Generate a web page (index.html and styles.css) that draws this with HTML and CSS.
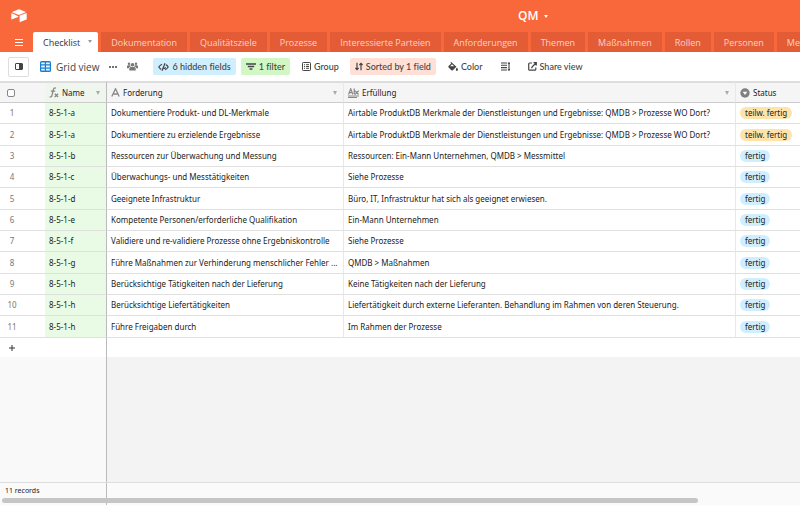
FILE: index.html
```html
<!DOCTYPE html>
<html lang="de">
<head>
<meta charset="utf-8">
<meta name="viewport" content="width=device-width, initial-scale=1">
<title>QM</title>
<link rel="stylesheet" href="styles.css">
</head>
<body>
<header class="topbar">
  <a class="logo" href="#" aria-label="Home"><svg width="16" height="14" viewBox="0 0 16 14" fill="currentColor"><path d="M7.1.5 1.6 2.7c-.4.2-.4.6 0 .8L7.200 5.700c.5.2 1 .2 1.500 0l5.600-2.200c.4-.2.4-.6 0-.8L8.800.5c-.6-.2-1.100-.2-1.700 0z"/><path d="M8.600 7v5.700c0 .3.300.5.600.4l6.200-2.500c.2-.1.300-.2.300-.4V4.600c0-.3-.3-.5-.6-.4L8.900 6.600c-.2.100-.3.200-.3.400z"/><path d="M7.100 7.300 1 4.300c-.3-.2-.7 0-.7.4v5.200c0 .5.500.6.800.4l6-2.400c.3-.1.300-.4 0-.6z"/></svg></a>
  <h1><button class="base" type="button">QM <i class="caret"></i></button></h1>
</header>
<nav class="tabs">
  <button class="menu" type="button" aria-label="Tables"><svg width="8" height="7" viewBox="0 0 8 7" stroke="currentColor" stroke-width="1"><path d="M0 .5h8M0 3.500h8M0 6.500h8"/></svg></button>
  <a class="tab active" href="#">Checklist <i class="caret"></i></a>
  <a class="tab" href="#">Dokumentation</a>
  <a class="tab" href="#">Qualitätsziele</a>
  <a class="tab" href="#">Prozesse</a>
  <a class="tab" href="#">Interessierte Parteien</a>
  <a class="tab" href="#">Anforderungen</a>
  <a class="tab" href="#">Themen</a>
  <a class="tab" href="#">Maßnahmen</a>
  <a class="tab" href="#">Rollen</a>
  <a class="tab" href="#">Personen</a>
  <a class="tab last" href="#">Me</a>
</nav>
<div class="toolbar">
  <button class="tool side" type="button" aria-label="Sidebar"><svg width="8" height="7" viewBox="0 0 8 7"><path d="M1 .5h6q.5 0 .5.500v5q0 .5-.5.500H1q-.5 0-.5-.5V1q0-.5.500-.5z" fill="none" stroke="currentColor"/><path d="M4 1h3v5H4z" fill="currentColor"/></svg></button>
  <button class="tool view" type="button"><svg width="11" height="11" viewBox="0 0 11 11"><rect width="11" height="11" rx="1.500" fill="#1a7fd0"/><path d="M1.200 1.400h3.600v1.800H1.200zM6 1.400h3.800v1.800H6zM1.200 4.500h3.600v2H1.200zM6 4.500h3.800v2H6zM1.200 7.700h3.600v1.900H1.200zM6 7.700h3.800v1.900H6z" fill="#e8f5ff"/></svg>Grid view</button>
  <button class="tool more" type="button" aria-label="More"><svg width="8" height="2" viewBox="0 0 8 2" fill="currentColor"><circle cx="1" cy="1" r="1"/><circle cx="4" cy="1" r="1"/><circle cx="7" cy="1" r="1"/></svg></button>
  <button class="tool people" type="button" aria-label="Collaborators"><svg width="11" height="9" viewBox="0 0 11 9" fill="#777"><circle cx="5.500" cy="2.800" r="1.800"/><circle cx="2" cy="1.700" r="1.200"/><circle cx="9" cy="1.700" r="1.200"/><path d="M2.300 8.500V6.600q0-1.700 1.700-1.700h3q1.700 0 1.700 1.700v1.900zM0 6.300V4.400q0-1.100 1.200-1.100h1.900l.8 1.100q-1.900 0-2.200 1.900zM11 6.300V4.400q0-1.100-1.200-1.100H7.900l-.8 1.100q1.900 0 2.200 1.900z"/></svg></button>
  <button class="tool chip blue" type="button"><svg width="11" height="8" viewBox="0 0 11 8" fill="none" stroke="currentColor" stroke-width="1.200"><path d="M4 1.300Q2 2 .8 4q1 1.700 2.400 2.400M7 6.700Q9 6 10.200 4 9.200 2.200 7.800 1.600M7 .3 4 7.700M5.600 5.700q1.600 0 1.800-1.700"/></svg>6 hidden fields</button>
  <button class="tool chip green" type="button"><svg width="10" height="7" viewBox="0 0 10 7" stroke="currentColor" stroke-width="1.300"><path d="M0 1h10M1.800 3.500h6.400M3.600 6h2.800"/></svg>1 filter</button>
  <button class="tool chip plain" type="button"><svg width="9" height="9" viewBox="0 0 9 9" fill="none" stroke="currentColor"><rect x=".5" y=".5" width="8" height="8" rx=".8"/><path d="M2 2.700h1M4 2.700h3M2 4.500h1M4 4.500h3M2 6.300h1M4 6.300h3"/></svg>Group</button>
  <button class="tool chip red" type="button"><svg width="8" height="9" viewBox="0 0 8 9" fill="none" stroke="currentColor" stroke-width="1.200"><path d="M2 .7v7M.4 6 2 7.700 3.600 6M6 8.300v-7M4.400 3 6 1.300 7.600 3"/></svg>Sorted by 1 field</button>
  <button class="tool chip plain" type="button"><svg width="10" height="9" viewBox="0 0 10 9" fill="currentColor"><path d="M2.500.6 3.200 0l5.200 4.700-3.600 3.600q-.7.600-1.400 0L.6 5.500q-.6-.7 0-1.400l2.600-2.600zM2.200 4.200h4L4 2.200z" fill-rule="evenodd"/><path d="M8.900 5.500q1.100 1.500 1.100 2.300 0 1.100-1.100 1.100T7.800 7.800q0-.8 1.100-2.300z"/></svg>Color</button>
  <button class="tool chip plain" type="button" aria-label="Row height"><svg width="9" height="9" viewBox="0 0 9 9" fill="none" stroke="currentColor" stroke-width="1.100"><path d="M0 1h6M0 3.300h6M0 5.600h6M0 8h6M8 .5v8M7 1.700l1-1 1 1M7 7.300l1 1 1-1"/></svg></button>
  <button class="tool chip plain" type="button"><svg width="9" height="9" viewBox="0 0 9 9" fill="none" stroke="currentColor" stroke-width="1.200"><path d="M4 1H1.600Q.7 1 .7 1.900v5.400q0 .9.900.9h5.300q.9 0 .9-.9V5.500M5.500.7h2.800v2.800M8 1 4.500 4.500q-.8.800-.8 1.800"/></svg>Share view</button>
</div>
<main class="grid">
  <table>
    <colgroup><col class="c-num"><col class="c-name"><col class="c-req"><col class="c-ful"><col></colgroup>
    <thead>
      <tr>
        <th><input type="checkbox" aria-label="Select all"></th>
        <th><div class="head"><svg width="10" height="11" viewBox="0 0 10 11" fill="none" stroke="#888" stroke-width="1.300"><path d="M7 1.300Q5 .2 4.400 2.600L3 8.300Q2.600 10.500.5 9.800M1.800 4.200h4.400M5.800 6.800l3.200 3.200M9.100 6.800 5.700 10"/></svg>Name<i class="caret"></i></div></th>
        <th><div class="head"><svg width="9" height="9" viewBox="0 0 9 9" fill="none" stroke="#888" stroke-width="1.300"><path d="M.8 8.500 4.500.8l3.700 7.700M2.200 6h4.600"/></svg>Forderung<i class="caret"></i></div></th>
        <th><div class="head"><svg width="11" height="10" viewBox="0 0 11 10" fill="none" stroke="#888" stroke-width="1.200"><path d="M.5 6.500 2.700.8l2.200 5.700M1.300 4.600h2.800M6.200.5v5.600M6.200 3.300q2-.6 2 1.300t-2 1.400M11 3.200q-2 0-2 1.500T11 6M0 8h11M0 9.500h9"/></svg>Erfüllung<i class="caret"></i></div></th>
        <th><div class="head"><svg width="10" height="10" viewBox="0 0 10 10"><circle cx="5" cy="5" r="4.700" fill="#808080"/><path d="M2.700 3.700h4.600L5 6.900z" fill="#fff"/></svg>Status</div></th>
      </tr>
    </thead>
    <tbody>
      <tr><td>1</td><td>8-5-1-a</td><td>Dokumentiere Produkt- und DL-Merkmale</td><td>Airtable ProduktDB Merkmale der Dienstleistungen und Ergebnisse: QMDB &gt; Prozesse WO Dort?</td><td><span class="pill part">teilw. fertig</span></td></tr>
      <tr><td>2</td><td>8-5-1-a</td><td>Dokumentiere zu erzielende Ergebnisse</td><td>Airtable ProduktDB Merkmale der Dienstleistungen und Ergebnisse: QMDB &gt; Prozesse WO Dort?</td><td><span class="pill part">teilw. fertig</span></td></tr>
      <tr><td>3</td><td>8-5-1-b</td><td>Ressourcen zur Überwachung und Messung</td><td>Ressourcen: Ein-Mann Unternehmen, QMDB &gt; Messmittel</td><td><span class="pill">fertig</span></td></tr>
      <tr><td>4</td><td>8-5-1-c</td><td>Überwachungs- und Messtätigkeiten</td><td>Siehe Prozesse</td><td><span class="pill">fertig</span></td></tr>
      <tr><td>5</td><td>8-5-1-d</td><td>Geeignete Infrastruktur</td><td>Büro, IT, Infrastruktur hat sich als geeignet erwiesen.</td><td><span class="pill">fertig</span></td></tr>
      <tr><td>6</td><td>8-5-1-e</td><td>Kompetente Personen/erforderliche Qualifikation</td><td>Ein-Mann Unternehmen</td><td><span class="pill">fertig</span></td></tr>
      <tr><td>7</td><td>8-5-1-f</td><td>Validiere und re-validiere Prozesse ohne Ergebniskontrolle</td><td>Siehe Prozesse</td><td><span class="pill">fertig</span></td></tr>
      <tr><td>8</td><td>8-5-1-g</td><td>Führe Maßnahmen zur Verhinderung menschlicher Fehler ...</td><td>QMDB &gt; Maßnahmen</td><td><span class="pill">fertig</span></td></tr>
      <tr><td>9</td><td>8-5-1-h</td><td>Berücksichtige Tätigkeiten nach der Lieferung</td><td>Keine Tätigkeiten nach der Lieferung</td><td><span class="pill">fertig</span></td></tr>
      <tr><td>10</td><td>8-5-1-h</td><td>Berücksichtige Liefertätigkeiten</td><td>Liefertätigkeit durch externe Lieferanten. Behandlung im Rahmen von deren Steuerung.</td><td><span class="pill">fertig</span></td></tr>
      <tr><td>11</td><td>8-5-1-h</td><td>Führe Freigaben durch</td><td>Im Rahmen der Prozesse</td><td><span class="pill">fertig</span></td></tr>
    </tbody>
  </table>
  <div class="split add"><div><button type="button" aria-label="Add record"><svg width="6" height="6" viewBox="0 0 6 6" stroke="#333" stroke-width="1"><path d="M0 3h6M3 0v6"/></svg></button></div><div></div></div>
  <div class="split rest"><div></div><div></div></div>
</main>
<footer class="foot">
  <div class="split"><div class="count">11 records</div><div></div></div>
  <div class="scroll"></div>
</footer>
</body>
</html>
```
FILE: styles.css
```css
:root {
  --orange: #f9683a;
  --tab: #e35c36;
  --line: #e0e0e0;
  --pane: 107px;
}
* { box-sizing: border-box; }
body {
  margin: 0;
  height: 100vh;
  display: flex;
  flex-direction: column;
  overflow: hidden;
  background: #fff;
  color: #222;
  font: 8px/12px "Noto Sans", "Open Sans", sans-serif;
}
button {
  border: 0;
  padding: 0;
  background: none;
  color: inherit;
  font: inherit;
}
svg { display: block; flex: none; }
.caret {
  border: 2px solid transparent;
  border-top: 3px solid currentColor;
  border-bottom: 0;
}
.topbar {
  display: grid;
  flex: none;
  grid-template-columns: 21fr auto 10fr;
  align-items: center;
  height: 32px;
  padding: 0 11px;
  background: var(--orange);
  color: #fff;
}
.logo { color: #fff; }
.topbar h1 { margin: 0; font: 600 12px/16px "Open Sans", sans-serif; }
.base { display: flex; align-items: center; gap: 5px; }
.tabs {
  display: flex;
  flex: none;
  gap: 3px;
  height: 20px;
  background: var(--orange);
  font: 500 9px/21px "Open Sans", sans-serif;
  overflow: hidden;
}
.menu { flex: none; width: 30px; padding: 0 0 0 15px; color: #fff; }
.tab {
  flex: none;
  padding: 0 10px;
  background: var(--tab);
  color: #fbd2c4;
  text-decoration: none;
  white-space: nowrap;
}
.tab.last { flex-grow: 1; }
.tab.active {
  display: flex;
  gap: 8px;
  padding-right: 6px;
  border-radius: 2px 2px 0 0;
  background: #fff;
  color: #333;
}
.active .caret { margin-top: 8px; color: #999; }
.toolbar {
  display: flex;
  flex: none;
  align-items: center;
  height: 29px;
  padding: 0 8px;
  font: 500 9px/12px Lato, sans-serif;
  font-variant-ligatures: none;
  white-space: nowrap;
}
.tool { display: flex; align-items: center; height: 17px; color: #444; }
.side { justify-content: center; width: 21px; height: 20px; border: 1px solid #ddd; border-radius: 2px; }
.view { gap: 5px; margin-left: 11px; font: 500 10px/12px "Open Sans", sans-serif; }
.more { margin-left: 10px; }
.people { margin: 0 15px 0 10px; }
.chip { gap: 3px; padding: 0 5px; margin-right: 5px; border-radius: 2px; }
.plain { padding: 0 6px 0 7px; }
.blue { background: #cfefff; }
.green { background: #d1f7c4; }
.red { background: #ffe0d6; }
.grid { display: flex; flex: 1; flex-direction: column; min-height: 0; overflow: hidden; }
table { width: 100%; table-layout: fixed; border-collapse: separate; border-spacing: 0; }
.c-num { width: 45px; }
.c-name { width: 62px; }
.c-req { width: 237px; }
.c-ful { width: 392px; }
th, td {
  height: 21px;
  padding: 0 4px;
  border-bottom: 1px solid var(--line);
  overflow: hidden;
  text-align: left;
  text-overflow: ellipsis;
  white-space: nowrap;
}
th { height: 22px; border-top: 2px solid #ddd; border-bottom-color: #ccc; background: #f5f5f5; font-weight: 400; }
th:nth-child(2) { background: #eff6ee; }
tbody tr:nth-child(3n + 2) td { height: 22px; }
th:first-child { padding-left: 7px; }
td:first-child { padding: 0 21px 0 0; color: #777; text-align: center; }
td:nth-child(2) { background: #e9fbe5; }
th:nth-child(2), td:nth-child(2) { border-right: 1px solid #bbb; }
th:nth-child(3), th:nth-child(4), td:nth-child(3), td:nth-child(4) { border-right: 1px solid #e8e8e8; }
input[type="checkbox"] {
  display: block;
  appearance: none;
  width: 8px;
  height: 8px;
  margin: 0;
  border: 1px solid #888;
  border-radius: 2px;
  background: #fff;
}
.head { display: flex; align-items: center; gap: 3px; }
.head .caret { margin: 0 2px 0 auto; border-width: 4px 2px 0; color: #aaa; }
.pill {
  display: inline-block;
  padding: 0 5px;
  border-radius: 6px;
  background: #cfefff;
  vertical-align: middle;
}
.pill.part { background: #ffe3a8; }
.split { display: grid; grid-template-columns: var(--pane) 1fr; }
.split > :first-child { border-right: 1px solid #bbb; }
.add { height: 19px; }
.add button { display: flex; align-items: center; height: 19px; padding-left: 9px; }
.rest { flex: 1; background: #f3f3f3; }
.rest > :first-child { background: #f9f9f9; }
.foot { flex: none; display: grid; border-top: 1px solid #ddd; background: #fafafa; }
.foot > * { grid-area: 1 / 1; height: 22px; }
.count { padding: 2px 5px; font-size: 7px; }
.foot > .scroll { align-self: end; width: 87%; height: 5px; margin: 0 0 2px 2px; border-radius: 3px; background: #c6c6c6; }
```
